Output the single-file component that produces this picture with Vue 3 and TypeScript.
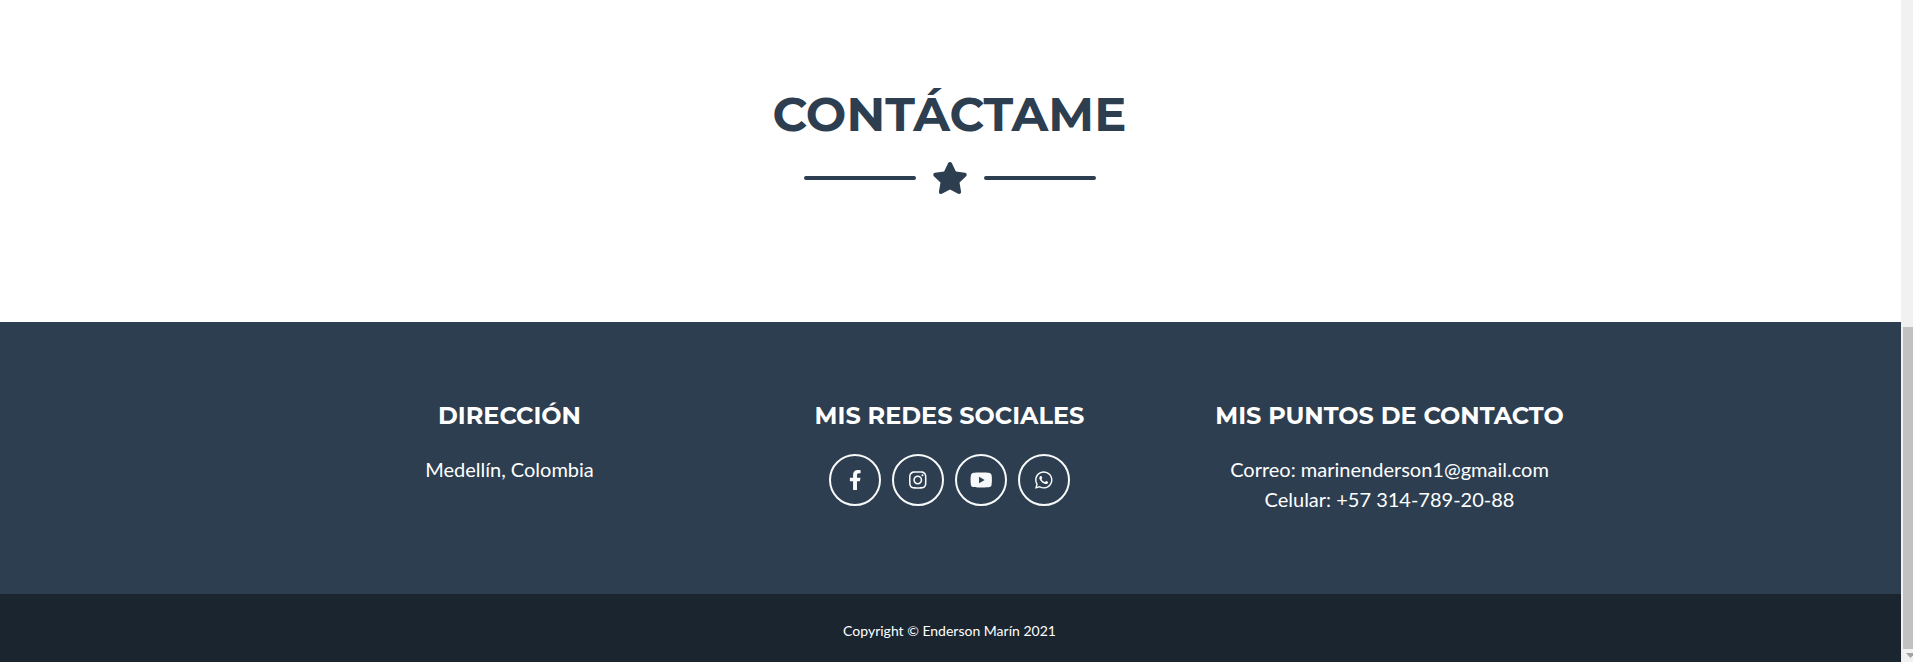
<script setup lang="ts">
interface Social {
  name: string
  href: string
  width: number
  path: string
}

const socials: Social[] = [
  {
    name: 'Facebook',
    href: '#facebook',
    width: 320,
    path: 'M279.14 288l14.22-92.66h-88.91v-60.13c0-25.35 12.42-50.06 52.24-50.06h40.42V6.26S260.43 0 225.36 0c-73.22 0-121.08 44.38-121.08 124.72v70.62H22.89V288h81.39v224h100.17V288z',
  },
  {
    name: 'Instagram',
    href: '#instagram',
    width: 448,
    path: 'M224.1 141c-63.6 0-114.9 51.3-114.9 114.9s51.3 114.9 114.9 114.9S339 319.5 339 255.9 287.7 141 224.1 141zm0 189.6c-41.1 0-74.7-33.5-74.7-74.7s33.5-74.7 74.7-74.7 74.7 33.5 74.7 74.7-33.6 74.7-74.7 74.7zm146.4-194.3c0 14.9-12 26.8-26.8 26.8-14.9 0-26.8-12-26.8-26.8s12-26.8 26.8-26.8 26.8 12 26.8 26.8zm76.1 27.2c-1.7-35.9-9.9-67.7-36.2-93.9-26.2-26.2-58-34.4-93.9-36.2-37-2.1-147.9-2.1-184.9 0-35.8 1.7-67.6 9.9-93.9 36.1s-34.4 58-36.2 93.9c-2.1 37-2.1 147.9 0 184.9 1.7 35.9 9.9 67.7 36.2 93.9s58 34.4 93.9 36.2c37 2.1 147.9 2.1 184.9 0 35.9-1.7 67.7-9.9 93.9-36.2 26.2-26.2 34.4-58 36.2-93.9 2.1-37 2.1-147.8 0-184.8zM398.8 388c-7.8 19.6-22.9 34.7-42.6 42.6-29.5 11.7-99.5 9-132.1 9s-102.7 2.6-132.1-9c-19.6-7.8-34.7-22.9-42.6-42.6-11.7-29.5-9-99.5-9-132.1s-2.6-102.7 9-132.1c7.8-19.6 22.9-34.7 42.6-42.6 29.5-11.7 99.5-9 132.1-9s102.7-2.6 132.1 9c19.6 7.8 34.7 22.9 42.6 42.6 11.7 29.5 9 99.5 9 132.1s2.7 102.7-9 132.1z',
  },
  {
    name: 'YouTube',
    href: '#youtube',
    width: 576,
    path: 'M549.655 124.083c-6.281-23.65-24.787-42.276-48.284-48.597C458.781 64 288 64 288 64S117.22 64 74.629 75.486c-23.497 6.322-42.003 24.947-48.284 48.597-11.412 42.867-11.412 132.305-11.412 132.305s0 89.438 11.412 132.305c6.281 23.65 24.787 41.5 48.284 47.821C117.22 448 288 448 288 448s170.78 0 213.371-11.486c23.497-6.321 42.003-24.171 48.284-47.821 11.412-42.867 11.412-132.305 11.412-132.305s0-89.438-11.412-132.305zm-317.51 213.508V175.185l142.739 81.205-142.739 81.201z',
  },
  {
    name: 'WhatsApp',
    href: '#whatsapp',
    width: 448,
    path: 'M380.9 97.1C339 55.1 283.2 32 223.9 32c-122.4 0-222 99.6-222 222 0 39.1 10.2 77.3 29.6 111L0 480l117.7-30.9c32.4 17.7 68.9 27 106.1 27h.1c122.3 0 224.1-99.6 224.1-222 0-59.3-25.2-115-67.1-157zm-157 341.6c-33.2 0-65.7-8.9-94-25.7l-6.7-4-69.8 18.3L72 359.2l-4.4-7c-18.5-29.4-28.2-63.3-28.2-98.2 0-101.7 82.8-184.5 184.6-184.5 49.3 0 95.6 19.2 130.4 54.1 34.8 34.9 56.2 81.2 56.1 130.5 0 101.8-84.9 184.6-186.6 184.6zm101.2-138.2c-5.5-2.8-32.8-16.2-37.9-18-5.1-1.9-8.8-2.8-12.5 2.8-3.7 5.6-14.3 18-17.6 21.8-3.2 3.7-6.5 4.2-12 1.4-32.6-16.3-54-29.1-75.5-66-5.7-9.8 5.7-9.1 16.3-30.3 1.8-3.7.9-6.9-.5-9.7-1.4-2.8-12.5-30.1-17.1-41.2-4.5-10.8-9.1-9.3-12.5-9.5-3.2-.2-6.9-.2-10.6-.2-3.7 0-9.7 1.4-14.8 6.9-5.1 5.6-19.4 19-19.4 46.3 0 27.3 19.9 53.7 22.6 57.4 2.8 3.7 39.1 59.7 94.8 83.8 35.2 15.2 49 16.5 66.6 13.9 10.7-1.6 32.8-13.4 37.4-26.4 4.6-13 4.6-24.1 3.2-26.4-1.3-2.5-5-3.9-10.5-6.6z',
  },
]
</script>

<template>
  <div class="window">
    <div class="page">
      <section class="contact" aria-labelledby="contact-title">
        <h2 id="contact-title">Contáctame</h2>
        <div class="divider">
          <span class="line"></span>
          <svg class="star" viewBox="0 0 576 512" aria-hidden="true">
            <path d="M259.3 17.8L194 150.2 47.9 171.5c-26.2 3.8-36.7 36.1-17.7 54.6l105.7 103-25 145.5c-4.5 26.3 23.2 46 46.4 33.7L288 439.6l130.7 68.7c23.2 12.2 50.9-7.4 46.4-33.7l-25-145.5 105.7-103c19-18.5 8.5-50.8-17.7-54.6L382 150.2 316.7 17.8c-11.7-23.6-45.6-23.9-57.4 0z" />
          </svg>
          <span class="line"></span>
        </div>
      </section>

      <footer class="footer">
        <div class="columns">
          <div class="column">
            <h4>Dirección</h4>
            <p>Medellín, Colombia</p>
          </div>
          <div class="column">
            <h4>Mis redes sociales</h4>
            <nav class="socials" aria-label="Mis redes sociales">
              <a v-for="s in socials" :key="s.name" class="social" :href="s.href" :aria-label="s.name">
                <svg :viewBox="`0 0 ${s.width} 512`" aria-hidden="true"><path :d="s.path" /></svg>
              </a>
            </nav>
          </div>
          <div class="column">
            <h4>Mis puntos de contacto</h4>
            <p>Correo: marinenderson1@gmail.com<br />Celular: +57 314-789-20-88</p>
          </div>
        </div>
      </footer>

      <div class="copyright"><small>Copyright © Enderson Marín 2021</small></div>
    </div>

    <div class="scrollbar" aria-hidden="true">
      <div class="track"></div>
      <div class="thumb"></div>
      <div class="arrow">
        <svg viewBox="0 0 7 5"><path d="M0 0h9L4.500 5z" /></svg>
      </div>
    </div>
  </div>
</template>

<style>
body {
  margin: 0;
}
</style>

<style scoped>
.window {
  display: grid;
  grid-template-columns: 1fr 12px;
  min-height: 100vh;
  font-family: Lato, 'Liberation Sans', sans-serif;
}

.page {
  display: flex;
  flex-direction: column;
  min-width: 0;
  text-align: center;
}

.contact {
  padding: 90px 14px 96px 12px;
  background: #fff;
  color: #2c3e50;
}

h2,
h4 {
  margin: 0;
  font-family: Montserrat, Inter, sans-serif;
  font-weight: 700;
  text-transform: uppercase;
}

h2 {
  font-size: 48px;
  line-height: 48px;
}

.divider {
  display: flex;
  align-items: center;
  justify-content: center;
  gap: 16px;
  height: 32px;
  margin: 24px 0 32px;
}

.line {
  width: 112px;
  height: 4px;
  border-radius: 4px;
  background: #2c3e50;
}

.star {
  width: 36px;
  height: 32px;
  fill: #2c3e50;
}

.footer {
  padding: 80px 2px 80px 0;
  background: #2c3e50;
  color: #fff;
}

.columns {
  display: grid;
  grid-template-columns: repeat(3, 1fr);
  max-width: 1320px;
  margin: 0 auto;
}

.column {
  padding: 0 12px;
}

h4 {
  margin-bottom: 24px;
  font-size: 24px;
  line-height: 28px;
}

.column p {
  margin: 0;
  font-size: 20px;
  line-height: 30px;
}

.socials {
  display: flex;
  justify-content: center;
  gap: 11px;
}

.social {
  display: flex;
  align-items: center;
  justify-content: center;
  box-sizing: border-box;
  width: 52px;
  height: 52px;
  border: 2px solid #f8f9fa;
  border-radius: 50%;
}

.social svg {
  height: 20px;
  fill: #f8f9fa;
}

.copyright {
  flex: 1;
  padding: 25px 14px 19px 12px;
  background: #1a252f;
  color: #fff;
}

.copyright small {
  display: block;
  font-size: 14px;
  line-height: 24px;
}

.scrollbar {
  display: flex;
  flex-direction: column;
  padding-left: 2px;
  background: #f1f1f1;
}

.track {
  flex: 327;
}

.thumb {
  flex: 322;
  background: #c1c1c1;
}

.arrow {
  display: flex;
  align-items: center;
  justify-content: flex-end;
  height: 13px;
}

.arrow svg {
  width: 7px;
  height: 5px;
  fill: #a3a3a3;
}
</style>
